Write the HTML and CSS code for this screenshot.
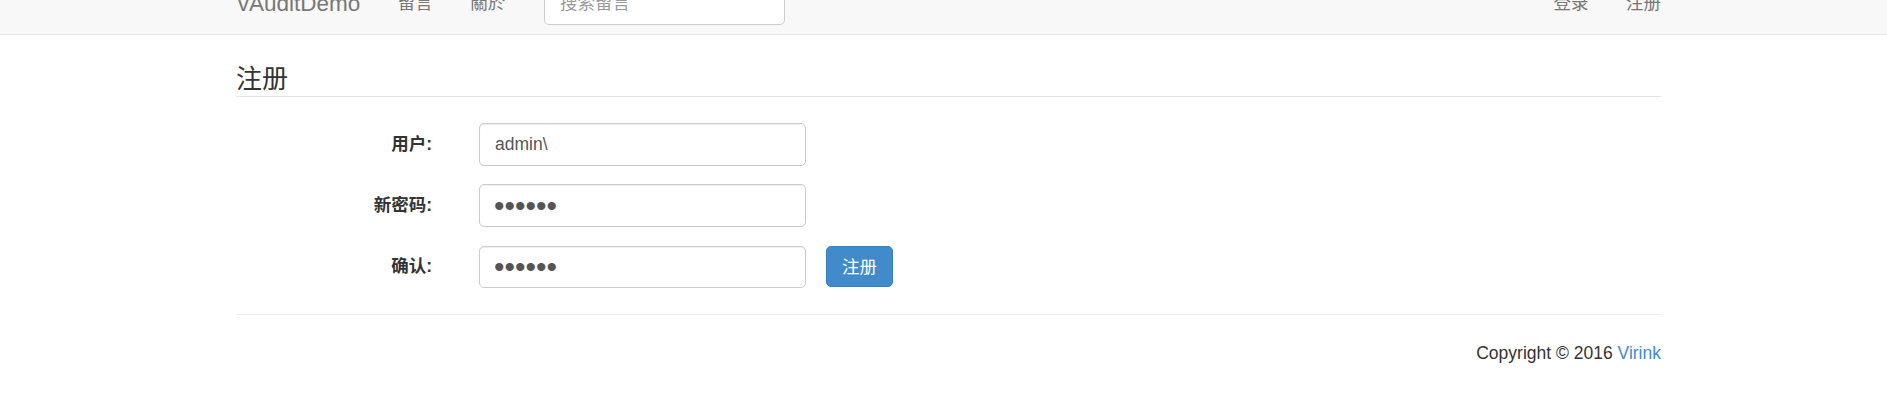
FILE: index.html
```html
<!DOCTYPE html>
<html lang="zh-CN">
<head>
<meta charset="utf-8">
<title>vAuditDemo - 注册</title>
<link rel="stylesheet" href="styles.css">
</head>
<body>
<nav class="navbar">
  <div class="nav-inner">
    <a class="brand" href="#">vAuditDemo</a>
    <ul class="nav">
      <li><a href="#">留言</a></li>
      <li><a href="#">關於</a></li>
    </ul>
    <form class="nav-search">
      <input class="nav-search-input" type="text" placeholder="搜索留言">
    </form>
    <ul class="nav nav-right">
      <li><a href="#">登录</a></li>
      <li><a href="#">注册</a></li>
    </ul>
  </div>
</nav>
<main class="container">
  <h3 class="page-header">注册</h3>
  <form class="reg-form">
    <div class="form-row">
      <label class="form-label">用户:</label>
      <input class="form-input" type="text" value="admin\">
    </div>
    <div class="form-row">
      <label class="form-label">新密码:</label>
      <input class="form-input pw" type="password" value="123456">
    </div>
    <div class="form-row">
      <label class="form-label">确认:</label>
      <input class="form-input pw" type="password" value="123456">
      <button class="btn-primary" type="button">注册</button>
    </div>
  </form>
  <hr class="footer-rule">
  <footer class="footer">Copyright © 2016 <a href="#">Virink</a></footer>
</main>
</body>
</html>
```

FILE: styles.css
```css
* { box-sizing: border-box; }
html, body {
  margin: 0;
  padding: 0;
  background: #fff;
  overflow: hidden;
}
body {
  font-family: "Liberation Sans", Arial, "Noto Sans CJK SC", sans-serif;
  font-size: 17.5px;
  line-height: 25px;
  color: #333;
}
a { text-decoration: none; }

.navbar {
  margin-top: -28px;
  height: 63px;
  background: #f8f8f8;
  border-bottom: 1px solid #e7e7e7;
}
.nav-inner {
  width: 1425px;
  margin-left: 236px;
  display: flex;
  align-items: flex-start;
}
.brand {
  display: block;
  margin-left: -17px;
  padding: 18.75px;
  font-size: 22.5px;
  line-height: 25px;
  color: #777;
}
.nav {
  list-style: none;
  margin: 0;
  padding: 0;
  display: flex;
}
.nav a {
  display: block;
  padding: 18.75px;
  line-height: 25px;
  color: #777;
}
.nav-right {
  margin-left: auto;
  margin-right: -18.75px;
}
.nav-search {
  margin: 10px 0 0 20px;
}
.nav-search-input {
  display: block;
  width: 241px;
  height: 42.5px;
  padding: 7.5px 15px;
  font: inherit;
  color: #555;
  border: 1px solid #ccc;
  border-radius: 5px;
  box-shadow: inset 0 1px 1px rgba(0,0,0,.075);
  background: #fff;
}
.nav-search-input::placeholder { color: #999; }

.container {
  width: 1425px;
  margin-left: 236px;
}
.page-header {
  margin: 29px 0 0;
  padding-bottom: 2px;
  font-size: 26px;
  line-height: 30px;
  font-weight: 400;
  color: #333;
  border-bottom: 1px solid #e5e5e5;
}
.reg-form {
  margin-top: 26px;
  display: flex;
  flex-direction: column;
  gap: 18.75px;
}
.form-row {
  display: flex;
  align-items: center;
}
.form-label {
  width: 196px;
  text-align: right;
  font-weight: bold;
  color: #333;
}
.form-input {
  margin-left: 47px;
  width: 327px;
  height: 42.5px;
  padding: 7.5px 15px;
  font: inherit;
  color: #555;
  border: 1px solid #ccc;
  border-radius: 5px;
  box-shadow: inset 0 1px 1px rgba(0,0,0,.075);
  background: #fff;
}
.form-input.pw {
  font-size: 30px;
  letter-spacing: 0;
  padding-left: 14px;
}
.btn-primary {
  margin-left: 20px;
  height: 41px;
  padding: 7.5px 15px;
  font: inherit;
  color: #fff;
  background: #428bca;
  border: 1px solid #357ebd;
  border-radius: 5px;
}
.footer-rule {
  margin: 25.5px 0 0;
  border: 0;
  border-top: 1px solid #eee;
  height: 0;
}
.footer {
  padding-top: 26px;
  text-align: right;
  color: #333;
}
.footer a { color: #428bca; }
```
